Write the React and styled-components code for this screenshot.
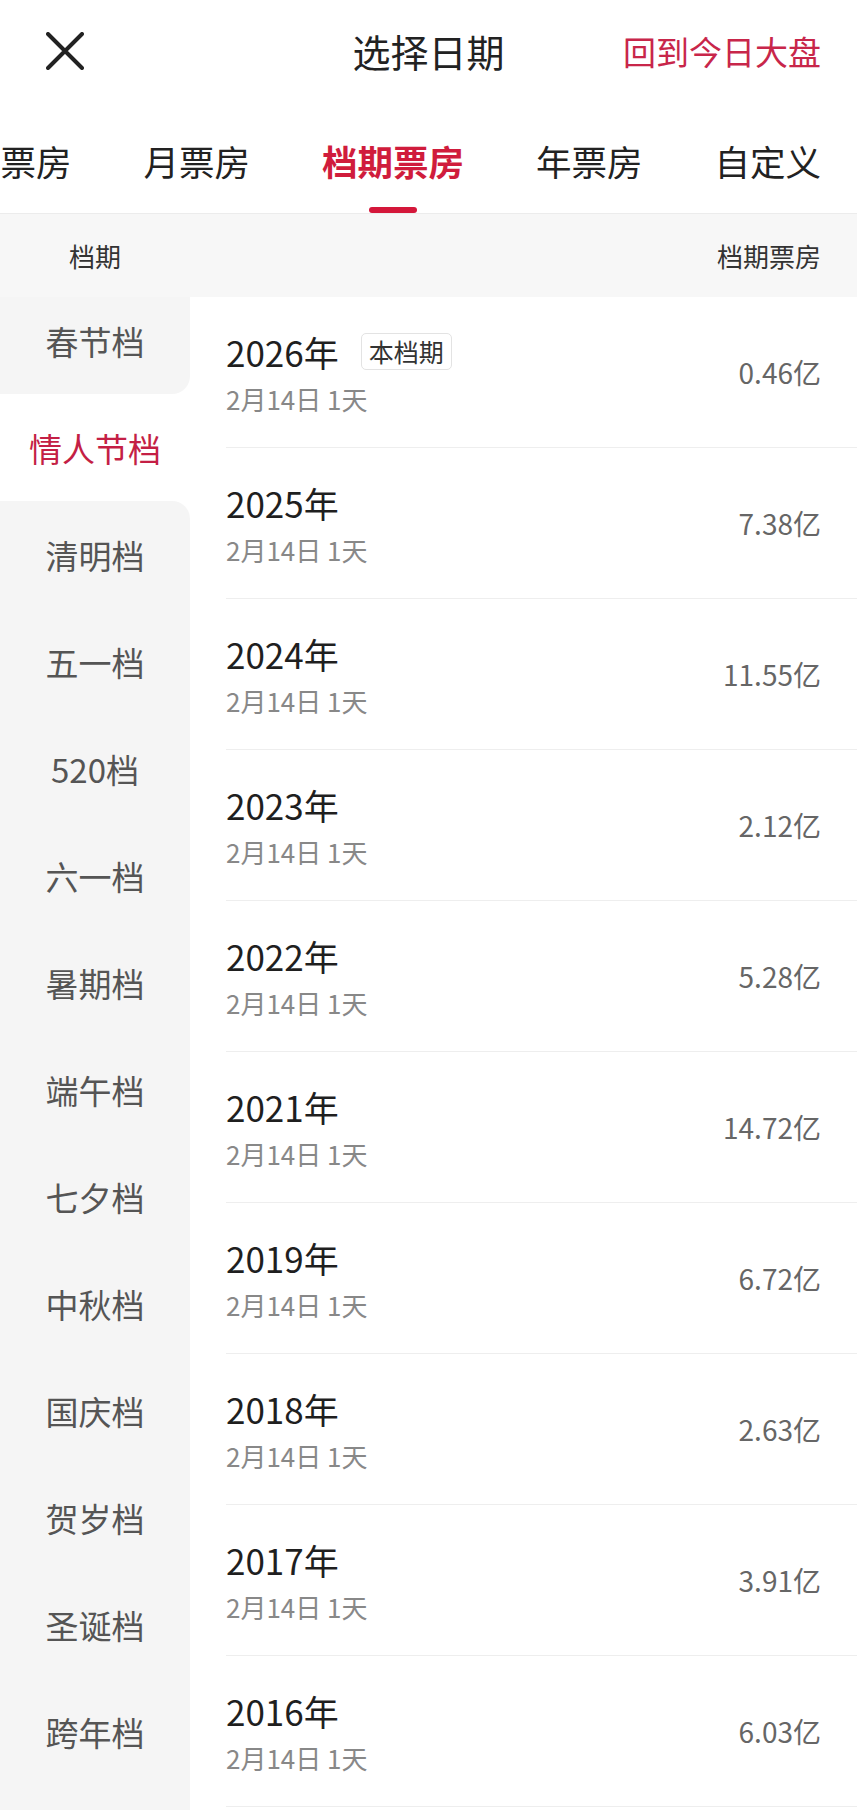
import React from "react";
import styled, { createGlobalStyle } from "styled-components";

const GlobalStyle = createGlobalStyle`
    body {
        margin: 0;
        background: #fff;
        font-family: "Noto Sans CJK SC", "Noto Sans", sans-serif;
        color: #222;
    }
`;

const Page = styled.div`
    width: 857px;
    height: 1810px;
    overflow: hidden;
    display: flex;
    flex-direction: column;
    background: #fff;
`;

//Barra superior
const Header = styled.header`
    height: 102px;
    display: grid;
    grid-template-columns: 1fr auto 1fr;
    align-items: center;
    padding: 0 36px;
    flex-shrink: 0;
`;

const Close = styled.button`
    justify-self: start;
    margin-left: 10px;
    width: 38px;
    height: 38px;
    padding: 0;
    border: none;
    background: none;
    display: flex;
`;

const Title = styled.h1`
    margin: 0;
    font-size: 38px;
    font-weight: 400;
    color: #222;
    line-height: 1;
`;

const BackLink = styled.a`
    justify-self: end;
    font-size: 33px;
    color: #c8264a;
    line-height: 1;
`;

//Abas
const TabBar = styled.nav`
    height: 111px;
    border-bottom: 1px solid #ececec;
    overflow: hidden;
    flex-shrink: 0;
`;

const TabStrip = styled.div`
    display: flex;
    gap: 72px;
    height: 100%;
    margin-left: -35px;
`;

const Tab = styled.div`
    position: relative;
    display: flex;
    align-items: center;
    flex-shrink: 0;
    padding-top: 6px;
    white-space: nowrap;
    font-size: 35.5px;
    font-weight: ${(props) => (props.active ? 700 : 400)};
    color: ${(props) => (props.active ? "#d01c3c" : "#222")};

    &::after {
        content: "";
        display: ${(props) => (props.active ? "block" : "none")};
        position: absolute;
        bottom: 0;
        left: 50%;
        transform: translateX(-50%);
        width: 48px;
        height: 6px;
        border-radius: 3px;
        background: #d4173a;
    }
`;

const ColumnHead = styled.div`
    height: 83px;
    flex-shrink: 0;
    display: flex;
    align-items: center;
    justify-content: space-between;
    padding: 0 36px 0 69px;
    background: #f7f7f7;
    font-size: 26px;
    color: #333;
`;

const Body = styled.div`
    flex: 1;
    display: grid;
    grid-template-columns: 190px 1fr;
    min-height: 0;
`;

//Lista lateral de temporadas
const Sidebar = styled.aside`
    display: flex;
    flex-direction: column;
    background: #fff;
    overflow: hidden;
`;

const SideList = styled.div`
    margin-top: -10px;
    display: flex;
    flex-direction: column;
`;

const SideItem = styled.div`
    height: 107px;
    flex-shrink: 0;
    display: flex;
    align-items: center;
    justify-content: center;
    font-size: 33px;
    color: ${(props) => (props.active ? "#c41f45" : "#555")};
    background: ${(props) => (props.active ? "#fff" : "#f5f5f5")};
    border-bottom-right-radius: ${(props) => (props.beforeActive ? "18px" : "0")};
    border-top-right-radius: ${(props) => (props.afterActive ? "18px" : "0")};
`;

const SideFill = styled.div`
    flex: 1;
    background: #f5f5f5;
`;

//Linhas com bilheteria
const Rows = styled.div`
    display: flex;
    flex-direction: column;
`;

const Row = styled.div`
    height: 150px;
    flex-shrink: 0;
    margin-left: 36px;
    padding-right: 36px;
    border-bottom: 1px solid #eeeeee;
    display: flex;
    align-items: center;
    justify-content: space-between;
`;

const Info = styled.div`
    display: flex;
    flex-direction: column;
`;

const YearLine = styled.div`
    display: flex;
    align-items: center;
    gap: 22px;
    height: 44px;
`;

const Year = styled.span`
    font-size: 35px;
    color: #1f1f1f;
`;

const Tag = styled.span`
    box-sizing: border-box;
    height: 37px;
    display: flex;
    align-items: center;
    padding: 0 7px;
    border: 1px solid #e3e3e3;
    border-radius: 5px;
    font-size: 25px;
    color: #333;
`;

const DateText = styled.span`
    margin-top: 10px;
    height: 32px;
    line-height: 32px;
    font-size: 26px;
    color: #888;
`;

const Value = styled.span`
    font-size: 28px;
    color: #666;
`;

const tabs = ["日票房", "月票房", "档期票房", "年票房", "自定义"];

const seasons = [
    "春节档", "情人节档", "清明档", "五一档", "520档", "六一档", "暑期档",
    "端午档", "七夕档", "中秋档", "国庆档", "贺岁档", "圣诞档", "跨年档",
];

const activeSeason = 1;

const years = [
    { year: 2026, value: "0.46", current: true },
    { year: 2025, value: "7.38" },
    { year: 2024, value: "11.55" },
    { year: 2023, value: "2.12" },
    { year: 2022, value: "5.28" },
    { year: 2021, value: "14.72" },
    { year: 2019, value: "6.72" },
    { year: 2018, value: "2.63" },
    { year: 2017, value: "3.91" },
    { year: 2016, value: "6.03" },
];

const CloseIcon = () => (
    <svg width="38" height="38" viewBox="0 0 38 38">
        <path d="M2 2 L36 36 M36 2 L2 36" stroke="#222" strokeWidth="4" strokeLinecap="round" />
    </svg>
);

const App = () => {
    return (
        <Page>
            <GlobalStyle />
            <Header>
                <Close aria-label="关闭"><CloseIcon /></Close>
                <Title>选择日期</Title>
                <BackLink>回到今日大盘</BackLink>
            </Header>
            <TabBar>
                <TabStrip>
                    {tabs.map((t) => (
                        <Tab key={t} active={t === "档期票房"}>{t}</Tab>
                    ))}
                </TabStrip>
            </TabBar>
            <ColumnHead>
                <span>档期</span>
                <span>档期票房</span>
            </ColumnHead>
            <Body>
                <Sidebar>
                    <SideList>
                        {seasons.map((s, i) => (
                            <SideItem
                                key={s}
                                active={i === activeSeason}
                                beforeActive={i === activeSeason - 1}
                                afterActive={i === activeSeason + 1}
                            >
                                {s}
                            </SideItem>
                        ))}
                    </SideList>
                    <SideFill />
                </Sidebar>
                <Rows>
                    {years.map((item) => (
                        <Row key={item.year}>
                            <Info>
                                <YearLine>
                                    <Year>{item.year}年</Year>
                                    {item.current && <Tag>本档期</Tag>}
                                </YearLine>
                                <DateText>2月14日 1天</DateText>
                            </Info>
                            <Value>{item.value}亿</Value>
                        </Row>
                    ))}
                </Rows>
            </Body>
        </Page>
    );
};

export default App;
